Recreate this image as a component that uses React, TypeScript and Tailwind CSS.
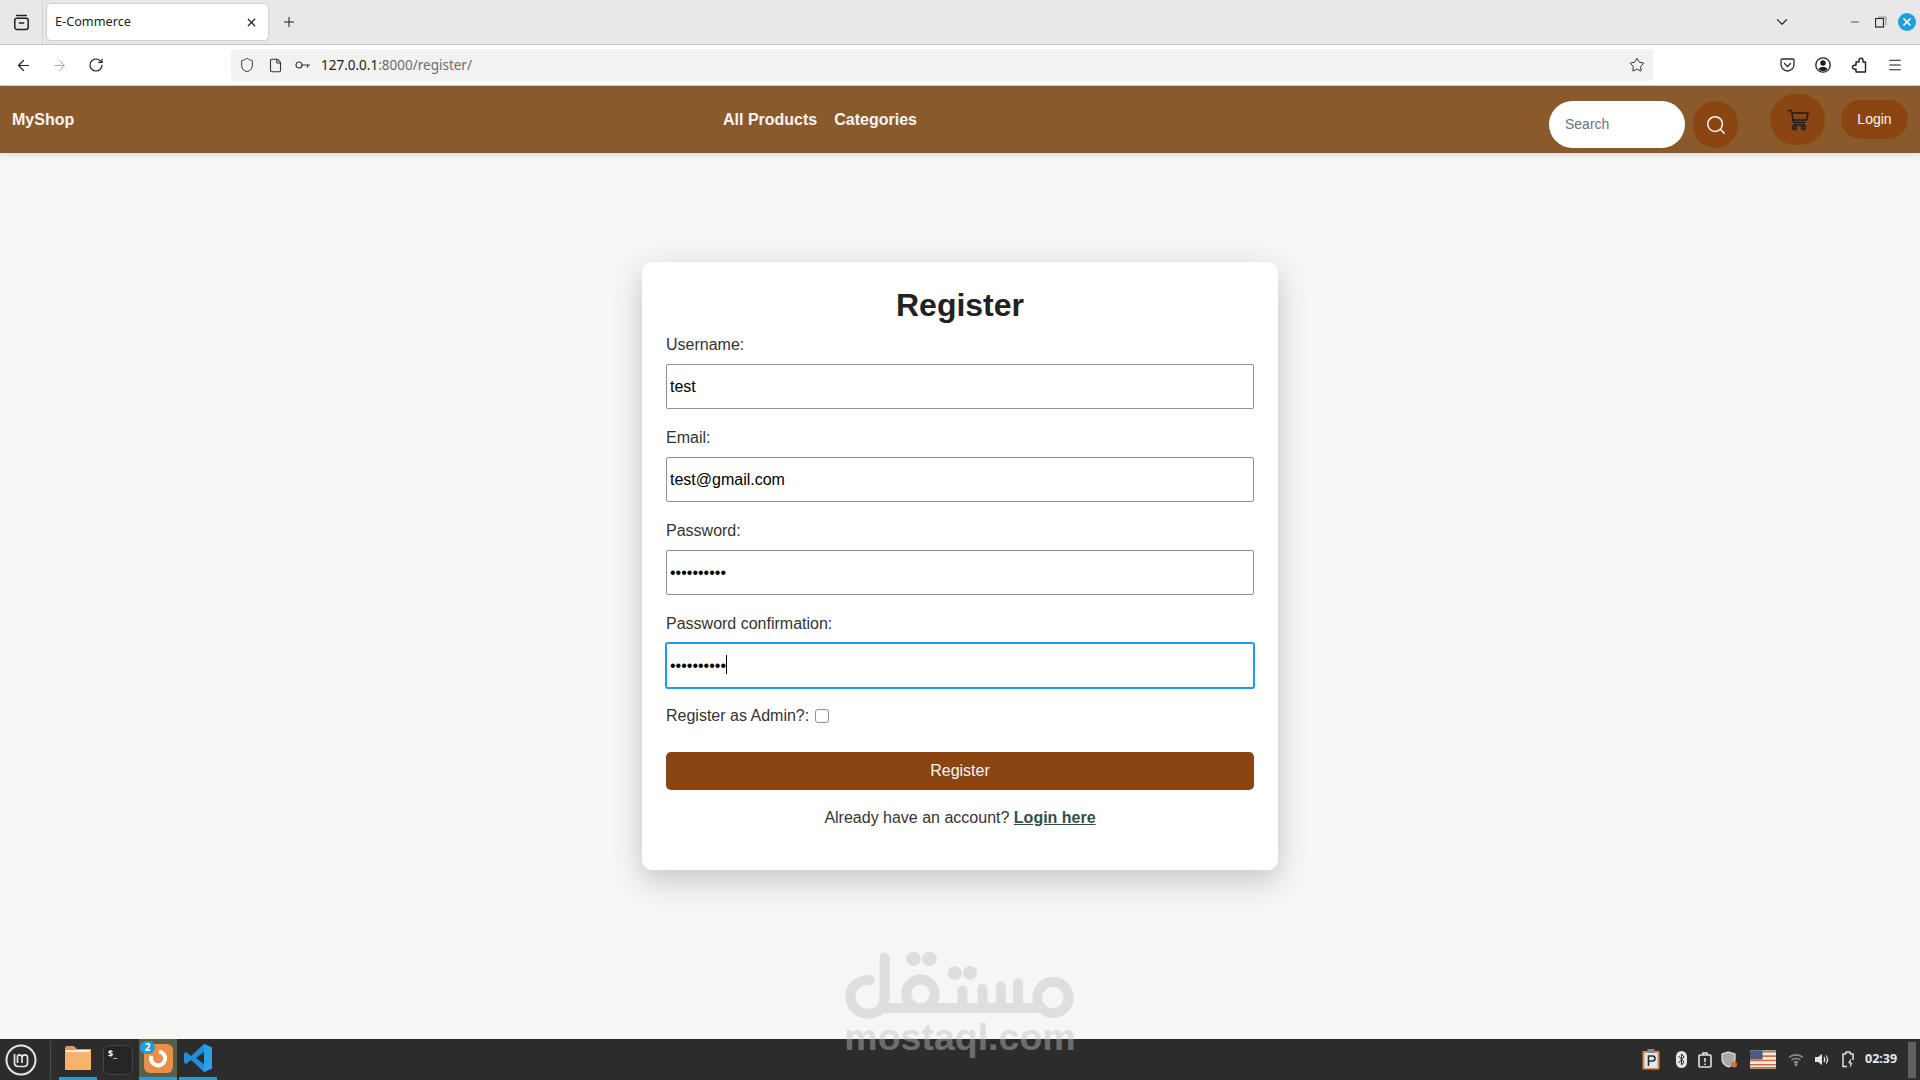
import { ArrowLeft, ArrowRight, RotateCw, Shield, File, Star, Menu, X, Plus, ChevronDown, Minus, Search } from "lucide-react";

function Field({ label, value, type = "text", focused = false }: { label: string; value: string; type?: string; focused?: boolean }) {
  return (
    <div className="mb-[20px]">
      <label className="block text-[16px] leading-[18px] mb-[10px] text-[#333333]">{label}</label>
      <div className="relative h-[45px]">
        {focused ? (
          <input readOnly type={type} value={value} className="block w-[calc(100%+2px)] h-[47px] -ml-px -mt-px border-2 border-[#1f9ede] rounded-[3px] pl-[3px] text-[16px] text-black bg-white outline-none caret-transparent" />
        ) : (
          <input readOnly type={type} value={value} className="block w-full h-[45px] border border-[#8f8f9d] rounded-[2px] pl-[3px] text-[16px] text-black bg-white outline-none caret-transparent" />
        )}
        {focused && <span className="absolute left-[60px] top-[13px] w-px h-[19px] bg-black" />}
      </div>
    </div>
  );
}

function Watermark() {
  return (
    <div className="absolute left-[840px] top-[945px] w-[240px] flex flex-col items-center pointer-events-none opacity-[0.44]">
      <svg width="240" height="83" viewBox="0 0 720 250" fill="none" stroke="#c1c1c1" strokeWidth="30" strokeLinecap="round" strokeLinejoin="round">
        <path d="M133 38V150C133 185 115 207 85 207C52 207 30 185 30 155C30 125 55 105 88 105" />
        <path d="M133 190H600" />
        <circle cx="241" cy="147" r="43" />
        <path d="M367 190V137M428 190V132M483 190V125M535 190V115" />
        <circle cx="640" cy="158" r="47" />
        <g fill="#c1c1c1" stroke="none">
          <circle cx="220" cy="42" r="22" />
          <circle cx="268" cy="42" r="22" />
          <circle cx="344" cy="84" r="21" />
          <circle cx="390" cy="84" r="21" />
        </g>
      </svg>
      <div className="font-['Liberation_Sans',sans-serif] font-bold text-[37.5px] leading-[37px] text-[#c1c1c1] mt-[-9px] whitespace-nowrap">mostaql.com</div>
    </div>
  );
}

function BrowserTabs() {
  return (
    <div className="h-[45px] shrink-0 bg-[#e8e8e8] border-b border-[#c4c4c4] flex items-center font-['Noto_Sans',sans-serif]">
      <div className="w-[43px] h-[44px] border-r border-[#d4d4d4] flex items-center justify-center">
        <svg width="17" height="17" viewBox="0 0 16 16" fill="none" stroke="#1f1f1f" strokeWidth="1.4">
          <path d="M3.5 1.5H12.5" strokeLinecap="round" />
          <rect x="1.7" y="4" width="12.6" height="10.5" rx="2" />
          <path d="M6 8.5H10" strokeLinecap="round" />
        </svg>
      </div>
      <div className="ml-[4px] w-[221px] h-[36px] bg-white rounded-[4px] shadow-[0_0_2px_rgba(0,0,0,0.35)] flex items-center pl-[8px] pr-[10px]">
        <span className="flex-1 text-[12.7px] text-[#1c1b22]">E-Commerce</span>
        <X size={13} strokeWidth={2.2} color="#1f1f1f" />
      </div>
      <Plus size={16} strokeWidth={1.5} color="#1f1f1f" className="ml-[13px]" />
      <div className="flex-1" />
      <ChevronDown size={18} strokeWidth={1.6} color="#2b2b2b" className="mr-[58px]" />
      <Minus size={12} strokeWidth={1.6} color="#2b2b2b" className="mr-[14px]" />
      <svg width="12" height="12" viewBox="0 0 12 12" fill="none" stroke="#2b2b2b" className="mr-[11px]">
        <rect x="0.5" y="2.5" width="8" height="8.5" strokeWidth="1.2" />
        <path d="M3 1H11V9" strokeWidth="0.8" stroke="#777" />
      </svg>
      <div className="w-[18px] h-[18px] rounded-full bg-[#1f9ede] flex items-center justify-center mr-[4px]">
        <X size={12} strokeWidth={3.4} color="#ffffff" />
      </div>
    </div>
  );
}

function BrowserNav() {
  return (
    <div className="h-[41px] shrink-0 bg-white border-b border-[#cfcfcf] flex items-center font-['Noto_Sans',sans-serif]">
      <ArrowLeft size={17} strokeWidth={1.7} color="#1f1f1f" className="ml-[15px]" />
      <ArrowRight size={17} strokeWidth={1.4} color="#a8a8a8" className="ml-[19px]" />
      <RotateCw size={16} strokeWidth={1.7} color="#1f1f1f" className="ml-[20px]" />
      <div className="ml-[127px] w-[1422px] h-[32px] rounded-[4px] bg-[#f2f2f2] flex items-center pl-[8px] pr-[8px]">
        <Shield size={16} strokeWidth={1.5} color="#333333" />
        <File size={15} strokeWidth={1.7} color="#333333" className="ml-[13px]" />
        <svg width="16" height="10" viewBox="0 0 16 10" fill="none" stroke="#333333" strokeWidth="1.2" className="ml-[12px]">
          <circle cx="4" cy="5" r="3" />
          <path d="M7 5H15M12.5 5V7.5" />
        </svg>
        <span className="ml-[10px] text-[13.5px] text-[#1c1b22]">127.0.0.1<span className="text-[#6d6d6d]">:8000/register/</span></span>
        <div className="flex-1" />
        <Star size={16} strokeWidth={1.5} color="#2b2b2b" />
      </div>
      <svg width="15" height="14" viewBox="0 0 15 14" fill="none" stroke="#2b2b2b" strokeWidth="1.3" className="ml-[127px]">
        <path d="M1 2.2C1 1.5 1.5 1 2.2 1H12.8C13.5 1 14 1.5 14 2.2V6.5C14 10 11 13 7.5 13C4 13 1 10 1 6.5Z" />
        <path d="M4.5 5.5L7.5 8.5L10.5 5.5" strokeLinecap="round" />
      </svg>
      <svg width="16" height="16" viewBox="0 0 16 16" className="ml-[20px]">
        <circle cx="8" cy="8" r="7.2" fill="none" stroke="#1f1f1f" strokeWidth="1.3" />
        <circle cx="8" cy="6" r="2.7" fill="#1f1f1f" />
        <path d="M3.5 12C4.5 10.4 6 10 8 10C10 10 11.5 10.4 12.5 12C11.3 13.4 9.8 14 8 14C6.2 14 4.7 13.4 3.5 12Z" fill="#1f1f1f" />
      </svg>
      <svg width="16" height="16" viewBox="0 0 16 16" fill="none" stroke="#1f1f1f" strokeWidth="1.4" strokeLinejoin="round" className="ml-[20px]">
        <path d="M5 5H8V3.2A2 2 0 0 1 12 3.2V5H14.5V15H5V12.2H3.5A2 2 0 0 1 3.5 8.2H5Z" />
      </svg>
      <Menu size={16} strokeWidth={1.6} color="#1f1f1f" className="ml-[20px]" />
    </div>
  );
}

function Header() {
  return (
    <header className="h-[67px] shrink-0 bg-[#8b5a2b] flex items-center shadow-[0_2px_5px_rgba(0,0,0,0.1)] relative pl-[12px] pr-[12px]">
      <div className="text-[16px] font-bold text-[#f5f5f5] w-[711px]">MyShop</div>
      <nav className="flex gap-[17px] text-[16px] font-bold text-[#f5f5f5]">
        <span>All Products</span>
        <span>Categories</span>
      </nav>
      <div className="flex-1" />
      <div className="w-[136px] h-[47px] mt-[10px] bg-white rounded-full flex items-center pl-[16px] text-[14px] text-[#6b7280]">Search</div>
      <div className="ml-[8px] mt-[10px] w-[45px] h-[47px] rounded-full bg-[#8b4513] flex items-center justify-center">
        <Search size={22} strokeWidth={1.7} color="#f5f5f5" />
      </div>
      <div className="ml-[32px] w-[55px] h-[51px] rounded-full bg-[#8b4513] flex items-center justify-center">
        <svg width="22" height="22" viewBox="0 0 22 22" fill="none" stroke="#1c1c1c" strokeWidth="1.5" strokeLinejoin="round">
          <path d="M1 1.5H4.5L6.5 13.5H19" />
          <path d="M5 4H21L19.5 11H6.2" />
          <path d="M6 16H18" />
          <circle cx="7.5" cy="18.8" r="1.8" />
          <circle cx="16.5" cy="18.8" r="1.8" />
        </svg>
      </div>
      <div className="ml-[16px] w-[67px] h-[39px] rounded-full bg-[#8b4513] flex items-center justify-center text-[14px] text-[#f5f5f5]">Login</div>
    </header>
  );
}

function Card() {
  return (
    <div className="w-[636px] h-[608px] bg-white rounded-[10px] shadow-[0_10px_30px_rgba(0,0,0,0.2)] px-[24px] pt-[25px]">
      <h2 className="text-[32px] leading-[37px] font-bold text-center text-[#222222] mb-[12px]">Register</h2>
      <Field label="Username:" value="test" />
      <Field label="Email:" value="test@gmail.com" />
      <Field label="Password:" value="••••••••••" type="password" />
      <Field label="Password confirmation:" value="••••••••••" type="password" focused />
      <div className="h-[18px] mt-[2px] flex items-center text-[16px] text-[#333333]">
        <span>Register as Admin?:</span>
        <span className="ml-[6px] w-[14px] h-[14px] border border-[#8f8f9d] rounded-[3px] bg-white" />
      </div>
      <div className="mt-[27px] h-[38px] rounded-[5px] bg-[#8b4513] flex items-center justify-center text-[16px] text-[#f5f5f5]">Register</div>
      <p className="mt-[19px] text-center text-[16px] leading-[18px] text-[#333333]">
        Already have an account? <span className="font-bold underline text-[#2f4f4f]">Login here</span>
      </p>
    </div>
  );
}

function Taskbar() {
  const tray = "#e4e4e4";
  return (
    <div className="h-[41px] shrink-0 bg-[#2c2c2c] flex items-center font-['Noto_Sans',sans-serif]">
      <svg width="32" height="32" viewBox="0 0 32 32" fill="none" stroke="#e6e6e6" className="ml-[5px]">
        <circle cx="16" cy="16" r="14.5" strokeWidth="2" />
        <path d="M9.5 10V18.5C9.5 21 11 22.5 13.5 22.5H19C21 22.5 22.5 21 22.5 19V13.5C22.5 11.8 21.4 10.8 20 10.8C18.5 10.8 17 11.8 17 13.5V19M17 13.5C17 11.8 15.8 10.8 14.3 10.8C13 10.8 12.5 11.5 12.5 12.5V19" strokeWidth="1.7" />
      </svg>
      <div className="ml-[13px] w-px h-[38px] bg-[#4a5049]" />
      <div className="ml-[8px] w-[38px] h-[41px] border-b-[3px] border-[#1f9ede] flex items-center justify-center">
        <svg width="28" height="26" viewBox="0 0 28 26">
          <path d="M1 3C1 2 2 1 3 1H10L13 4H27V25H1Z" fill="#e59a52" />
          <rect x="1" y="6" width="26" height="19" fill="#f6b36e" />
          <rect x="2" y="5" width="24" height="2" fill="#f2efe8" />
        </svg>
      </div>
      <div className="ml-[4px] w-[34px] h-[41px] flex items-center justify-center">
        <div className="w-[30px] h-[30px] rounded-[6px] bg-[#262626] border border-[#454545] pl-[4px] pt-[1px] text-[9px] leading-[13px] text-white font-bold">$_</div>
      </div>
      <div className="ml-[4px] w-[38px] h-[41px] bg-[#56604f] border-b-[3px] border-[#1f9ede] flex items-center justify-center relative">
        <div className="w-[29px] h-[29px] rounded-[6px] bg-[#e8904a] flex items-center justify-center">
          <svg width="20" height="20" viewBox="0 0 20 20" fill="none" stroke="#ffffff" strokeWidth="4">
            <path d="M11 3.5A7 7 0 1 1 3.5 8" />
          </svg>
        </div>
        <span className="absolute left-[1px] top-[2px] w-[15px] h-[13px] rounded-full bg-[#1f9ede] text-white text-[10px] leading-[13px] font-bold text-center">2</span>
      </div>
      <div className="ml-[2px] w-[38px] h-[41px] border-b-[3px] border-[#1f9ede] flex items-center justify-center">
        <svg width="30" height="30" viewBox="0 0 30 30">
          <path d="M21 1L29 4.5V25.5L21 29L8 17L3 21L1 19.5V10.5L3 9L8 13ZM21 9L13 15L21 21Z" fill="#1f8ed6" />
          <path d="M21 1L29 4.5V25.5L21 29Z" fill="#2aa0e6" />
        </svg>
      </div>
      <div className="flex-1" />
      <svg width="18" height="21" viewBox="0 0 18 21">
        <rect x="0.5" y="2" width="17" height="18.5" rx="1" fill="#d98b4a" />
        <rect x="2.5" y="4" width="13" height="15" fill="#dfe9f2" />
        <rect x="5.5" y="0" width="7" height="4" fill="#8a8a8a" />
        <path d="M6.5 17V7H10.5C12.5 7 13 8.2 13 9.5C13 10.8 12 12 10.5 12H6.5" fill="none" stroke="#2c2c2c" strokeWidth="1.6" />
      </svg>
      <svg width="11" height="17" viewBox="0 0 11 17" className="ml-[16px]">
        <rect x="0" y="0" width="11" height="17" rx="5.5" fill={tray} />
        <path d="M2.5 5L8 11L5.5 14V3L8 6L2.5 12" fill="none" stroke="#2c2c2c" strokeWidth="1" />
      </svg>
      <svg width="14" height="16" viewBox="0 0 14 16" className="ml-[11px]" fill="none" stroke={tray} strokeWidth="1.6">
        <rect x="1" y="3" width="12" height="12" rx="1" />
        <path d="M5 3V1H9V3" />
        <path d="M7 6V10M7 11.5V13" />
      </svg>
      <svg width="17" height="17" viewBox="0 0 17 17" className="ml-[9px]">
        <path d="M7.5 1L14 3V8C14 12 11 14.5 7.5 16C4 14.5 1 12 1 8V3Z" fill="#a9a9a9" stroke={tray} strokeWidth="1.2" />
        <circle cx="13" cy="13.5" r="3" fill="#c8763a" />
      </svg>
      <svg width="26" height="19" viewBox="0 0 27 19" className="ml-[12px]">
        <rect width="27" height="19" fill="#f1e8df" />
        <path d="M0 1.5H27M0 6H27M0 10.5H27M0 15H27M0 18H27" stroke="#c96f4a" strokeWidth="1.6" />
        <rect width="13" height="9.5" fill="#4a5a85" />
      </svg>
      <svg width="16" height="13" viewBox="0 0 16 13" fill="none" stroke="#8f8f8f" strokeWidth="1.6" className="ml-[12px]">
        <path d="M1 4.5C5 1 11 1 15 4.5M3.5 7C6 5 10 5 12.5 7M6 9.5C7.2 8.7 8.8 8.7 10 9.5" />
        <circle cx="8" cy="11.5" r="0.8" fill="#8f8f8f" />
      </svg>
      <svg width="15" height="13" viewBox="0 0 15 13" fill="none" className="ml-[11px]">
        <path d="M0 4H3L7 1V12L3 9H0Z" fill={tray} />
        <path d="M9 4C10 5.5 10 7.5 9 9M11 2.5C13 5 13 8 11 10.5" stroke={tray} strokeWidth="1.2" />
      </svg>
      <svg width="14" height="17" viewBox="0 0 14 17" fill="none" stroke={tray} strokeWidth="1.5" className="ml-[11px]">
        <path d="M9 3H12V9M6 15.5H2V3H5M5 3V1H9V3" />
        <path d="M10 8L7.5 12H11L9 16" fill={tray} strokeWidth="0.8" />
      </svg>
      <span className="ml-[10px] w-[34px] text-[12.5px] font-bold text-[#e0ecf7] whitespace-nowrap">02:39</span>
      <div className="ml-[9px] mr-[4px] w-[8px] h-[36px] bg-[#5d635c]" />
    </div>
  );
}

export default function App() {
  return (
    <div className="relative h-screen flex flex-col overflow-hidden bg-[#f7f6f4] font-['Liberation_Sans',Arial,sans-serif]">
      <BrowserTabs />
      <BrowserNav />
      <Header />
      <main className="flex-1 flex justify-center pt-[109px]">
        <Card />
      </main>
      <Taskbar />
      <Watermark />
    </div>
  );
}
